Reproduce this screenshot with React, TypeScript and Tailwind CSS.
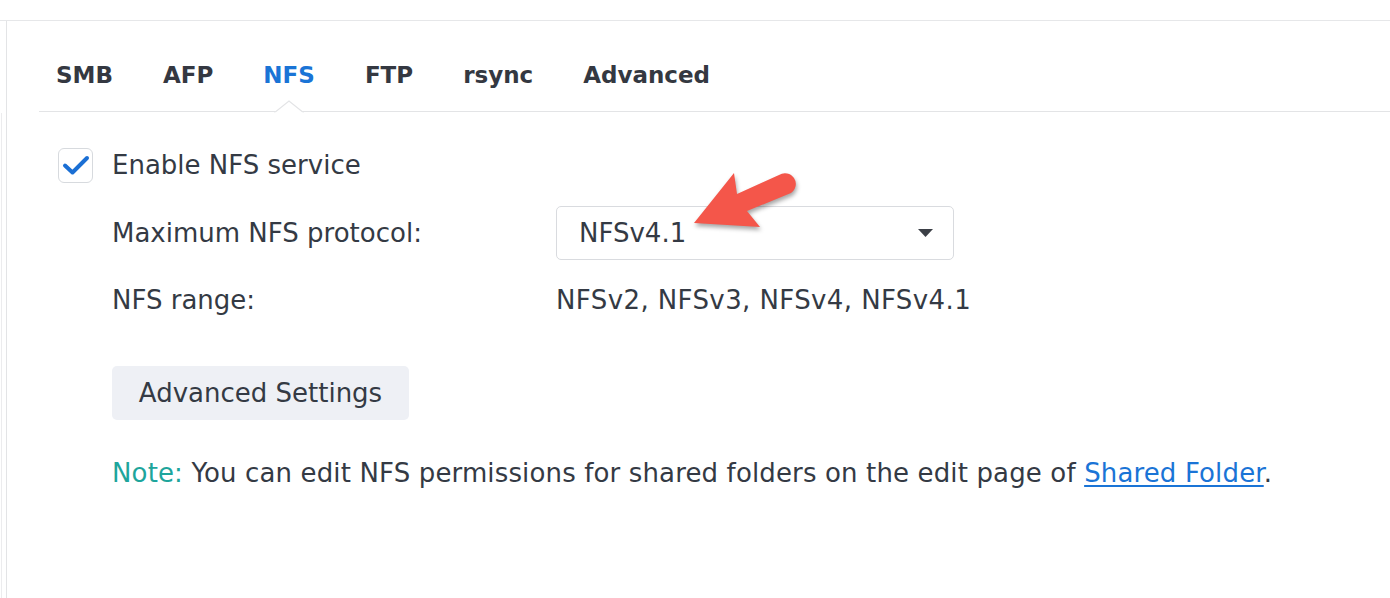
import React from 'react';

const tabs = ['SMB', 'AFP', 'NFS', 'FTP', 'rsync', 'Advanced'];
const font = { fontFamily: '"DejaVu Sans", Verdana, sans-serif' };

function RedArrow() {
  return (
    <svg
      className="absolute left-[680px] top-[160px]"
      width="130"
      height="80"
      viewBox="0 0 130 80"
      style={{ filter: 'drop-shadow(1px 3px 2px rgba(0,0,0,0.35))' }}
    >
      <path
        d="M14 63 L54 13 L57 34 L99 15 A10 10 0 0 1 111 33 L67 51 L80 67 Z"
        fill="#f4564a"
      />
    </svg>
  );
}

export default function App() {
  return (
    <div className="relative h-[598px] w-[1390px] overflow-hidden bg-white text-[#343a44]" style={font}>
      <div className="h-[20px]" />
      <div className="flex h-[578px] border-t border-[#e6e7e9]">
        {/* left edge strip */}
        <div className="w-[6px] pt-[92px]">
          <div className="ml-[1px] h-full border-l border-[#ececee]" />
        </div>

        <main className="flex-1 border-l border-[#e3e4e6]">
          {/* Tab bar */}
          <div className="relative ml-[32px] flex h-[91px] items-end gap-[50px] border-b border-[#e3e4e6] pb-[22px] pl-[17px]">
            {tabs.map((t) => (
              <span
                key={t}
                className={`text-[23px] font-bold leading-[28px] ${t === 'NFS' ? 'text-[#1a74d6]' : 'text-[#343841]'}`}
              >
                {t}
              </span>
            ))}
            {/* active notch */}
            <svg className="absolute left-[235px] top-[79px]" width="30" height="14" viewBox="0 0 30 14">
              <path d="M0 13 L15 1 L30 13" fill="white" stroke="#e3e4e6" strokeWidth="1.2" />
              <rect x="0" y="12.4" width="30" height="2" fill="white" />
            </svg>
          </div>

          <div className="pl-[51px]">
            {/* Enable checkbox */}
            <div className="mt-[35px] flex h-[36px] items-center gap-[19px]">
              <div className="flex h-[35px] w-[35px] items-center justify-center rounded-[6px] border border-[#d7dade] bg-white">
                <svg width="28" height="22" viewBox="0 0 28 22">
                  <path d="M3 11.5 L10.5 18.5 L25 4" fill="none" stroke="#1b6fd4" strokeWidth="4" strokeLinecap="round" strokeLinejoin="round" />
                </svg>
              </div>
              <span className="text-[26px] leading-[30px]">Enable NFS service</span>
            </div>

            <div className="pl-[54px]">
              {/* Max protocol */}
              <div className="mt-[23px] flex h-[54px] items-center">
                <span className="w-[444px] text-[26px] leading-[30px]">Maximum NFS protocol:</span>
                <div className="flex h-[54px] w-[398px] items-center justify-between rounded-[5px] border border-[#d9dbdf] pl-[22px] pr-[20px]">
                  <span className="text-[26px] leading-[30px]">NFSv4.1</span>
                  <svg width="15" height="8" viewBox="0 0 15 8">
                    <path d="M0 0 H15 L7.5 8 Z" fill="#3b3f46" />
                  </svg>
                </div>
              </div>

              {/* Range */}
              <div className="mt-[25px] flex h-[30px] items-center">
                <span className="w-[444px] text-[26px] leading-[30px]">NFS range:</span>
                <span className="text-[26px] leading-[30px] tracking-[0.4px]">NFSv2, NFSv3, NFSv4, NFSv4.1</span>
              </div>

              {/* Advanced settings */}
              <button className="mt-[51px] flex h-[54px] w-[297px] items-center justify-center rounded-[5px] bg-[#eef0f5] text-[26px] leading-[30px] text-[#343a44]">
                Advanced Settings
              </button>

              {/* Note */}
              <p className="mt-[38px] text-[26px] leading-[30px] tracking-[0.14px]">
                <span className="text-[#1ea59c]">Note:</span> You can edit NFS permissions for shared folders on the edit page of{' '}
                <a className="text-[#1a74d6] underline underline-offset-[3px]">Shared Folder</a>.
              </p>
            </div>
          </div>
        </main>
      </div>

      <RedArrow />
    </div>
  );
}
